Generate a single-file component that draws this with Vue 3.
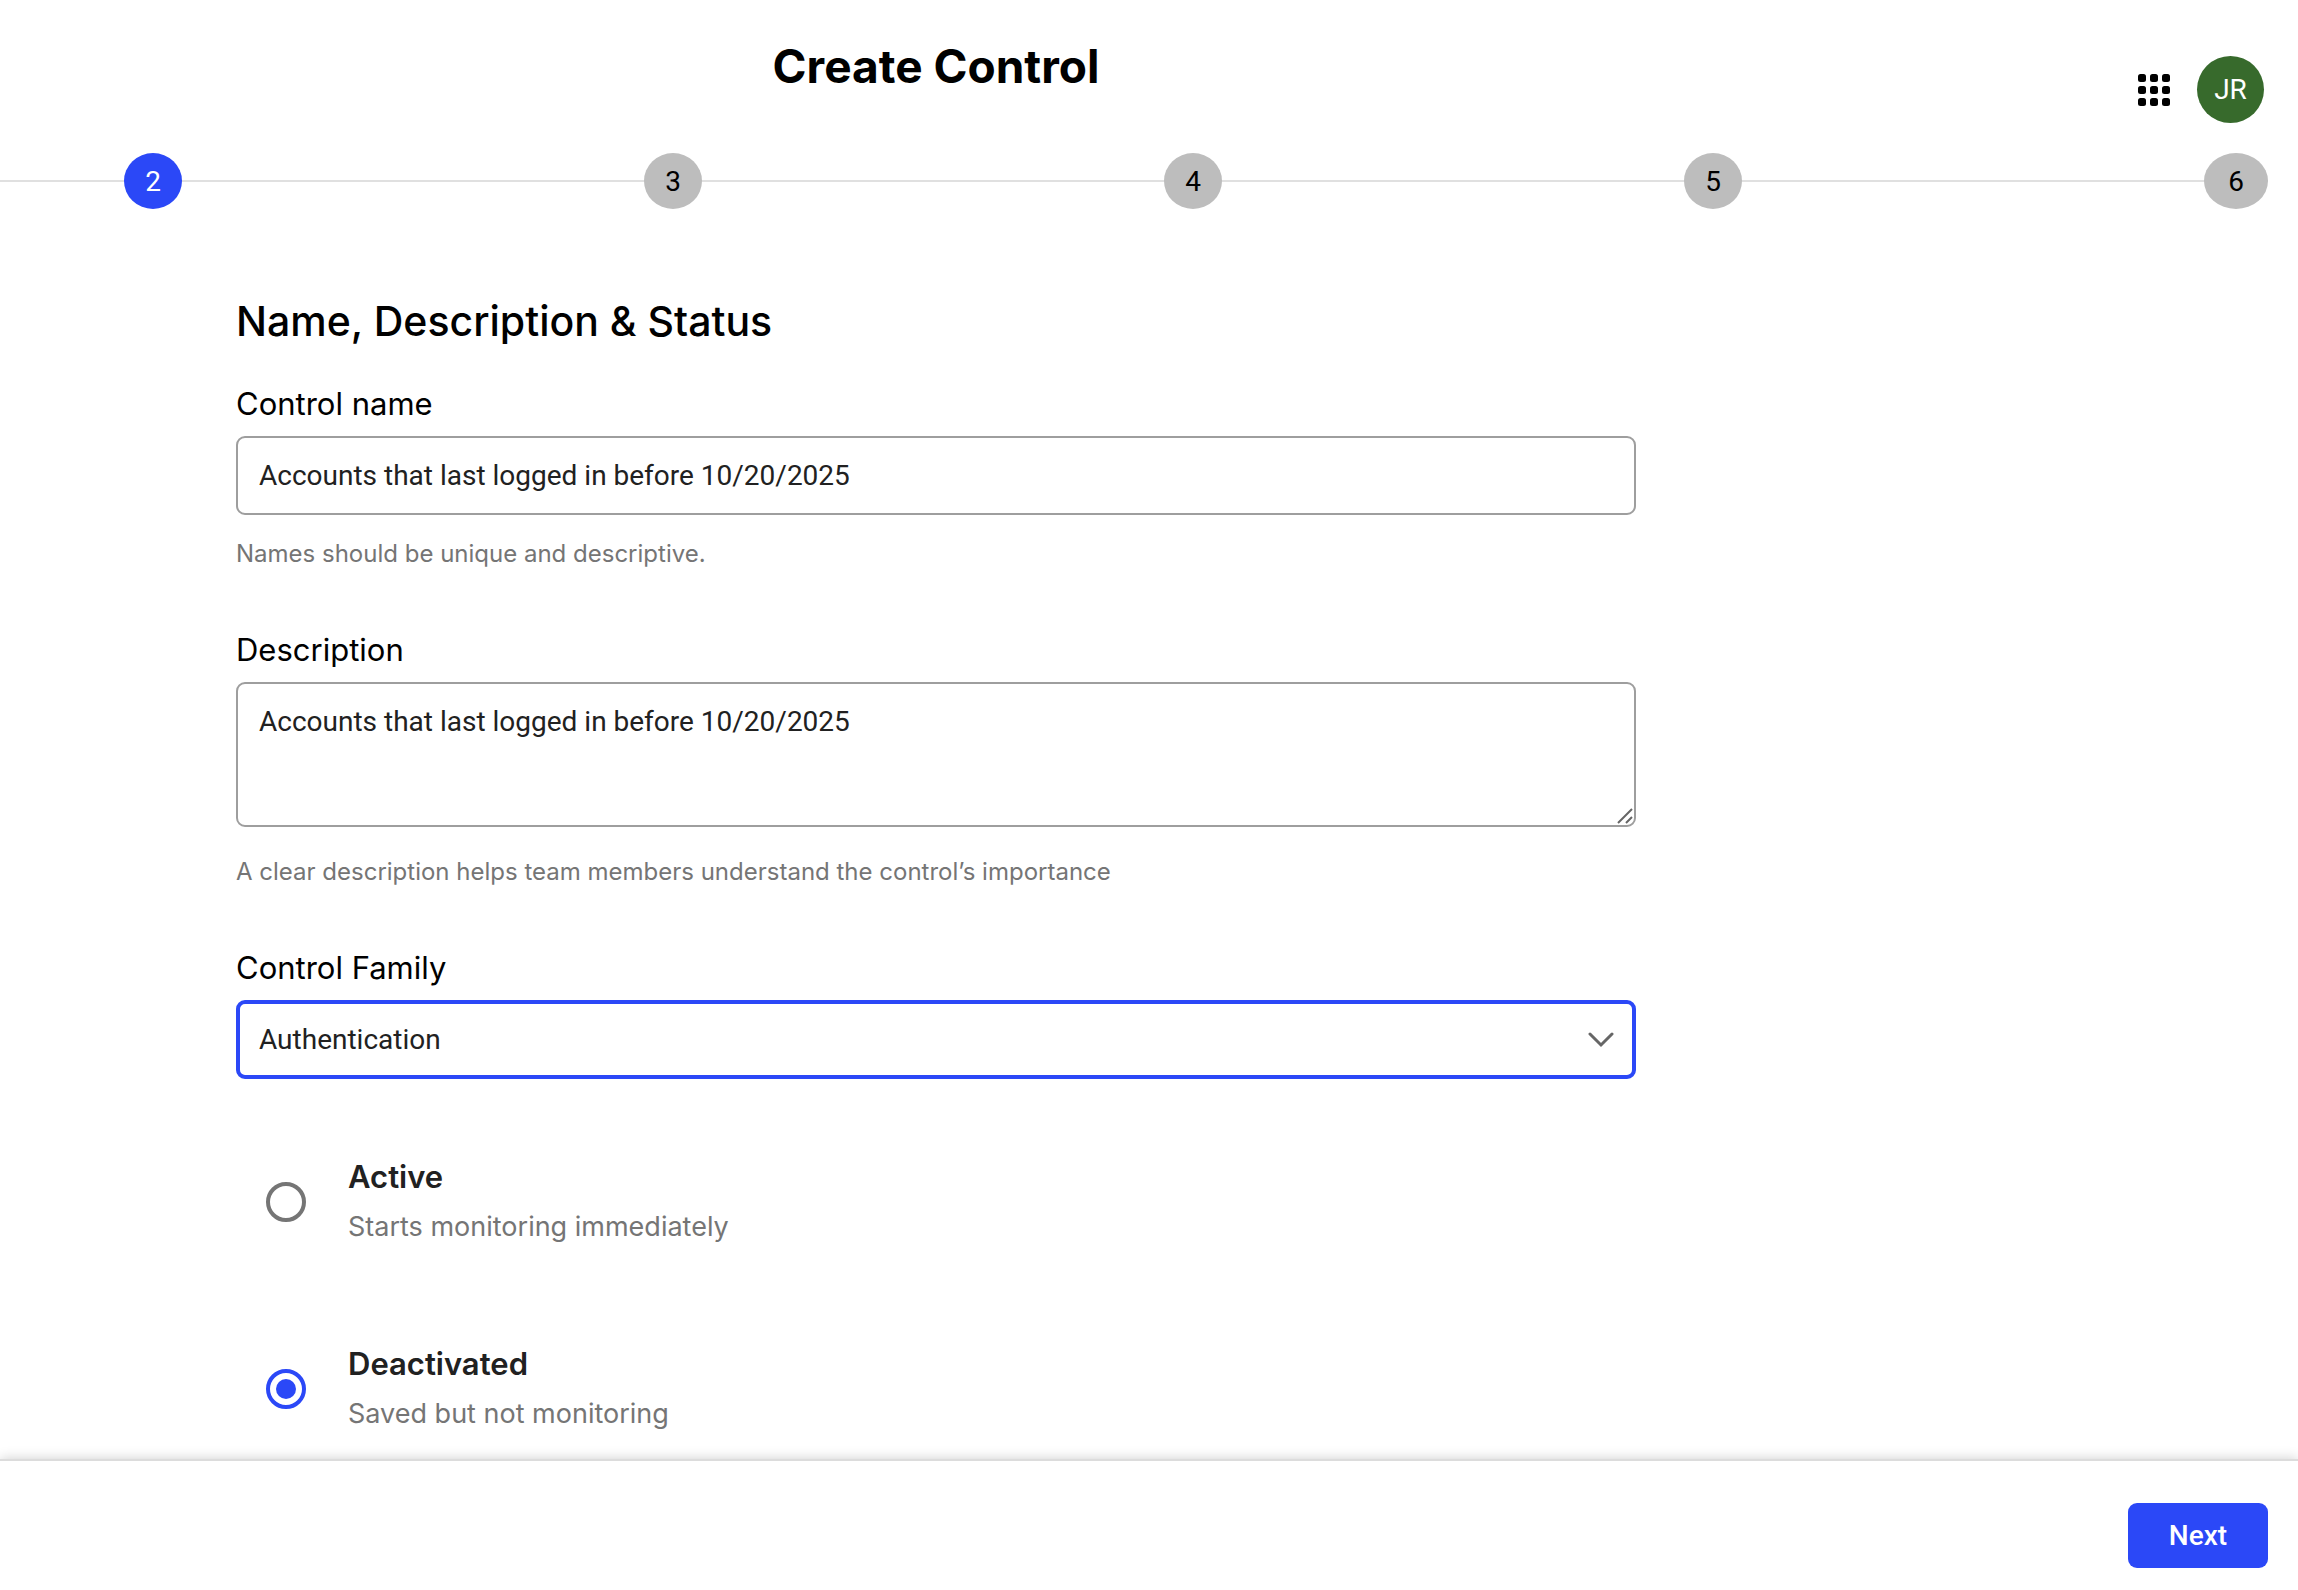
<script setup>
import { ref } from 'vue'

const steps = [2, 3, 4, 5, 6]
const currentStep = 2

const name = ref('Accounts that last logged in before 10/20/2025')
const description = ref('Accounts that last logged in before 10/20/2025')
const family = ref('Authentication')
const status = ref('deactivated')

const statuses = [
  { value: 'active', title: 'Active', detail: 'Starts monitoring immediately' },
  { value: 'deactivated', title: 'Deactivated', detail: 'Saved but not monitoring' },
]
</script>

<template>
  <div class="page">
    <header class="header">
      <h1 class="title">Create Control</h1>
      <div class="actions">
        <button class="apps" type="button" aria-label="Apps">
          <svg width="32" height="32" viewBox="0 0 32 32" aria-hidden="true">
            <template v-for="r in 3" :key="r">
              <rect v-for="c in 3" :key="c" :x="(c - 1) * 12" :y="(r - 1) * 12" width="8" height="8" rx="2.5" />
            </template>
          </svg>
        </button>
        <button class="avatar" type="button">JR</button>
      </div>
    </header>

    <ol class="stepper">
      <li v-for="s in steps" :key="s" class="step">
        <span class="dot" :class="{ current: s === currentStep }">{{ s }}</span>
      </li>
    </ol>

    <main class="form">
      <h2 class="heading">Name, Description &amp; Status</h2>

      <div class="field">
        <label class="label" for="name">Control name</label>
        <input id="name" v-model="name" class="control" type="text" />
        <p class="hint">Names should be unique and descriptive.</p>
      </div>

      <div class="field">
        <label class="label" for="description">Description</label>
        <div class="wrap">
          <textarea id="description" v-model="description" class="control area"></textarea>
          <svg class="grip" width="16" height="16" viewBox="0 0 16 16" aria-hidden="true">
            <path d="M1 15 15 1M9 15l6-6" />
          </svg>
        </div>
        <p class="hint area-hint">A clear description helps team members understand the control’s importance</p>
      </div>

      <div class="field">
        <label class="label" for="family">Control Family</label>
        <div class="wrap">
          <select id="family" v-model="family" class="control select">
            <option>Authentication</option>
          </select>
          <svg class="chevron" width="26" height="16" viewBox="0 0 26 16" aria-hidden="true">
            <path d="M2 2l11 11L24 2" />
          </svg>
        </div>
      </div>

      <div class="options" role="radiogroup" aria-label="Status">
        <label v-for="o in statuses" :key="o.value" class="option">
          <input v-model="status" class="radio" type="radio" name="status" :value="o.value" />
          <span class="option-text">
            <span class="option-title">{{ o.title }}</span>
            <span class="option-detail">{{ o.detail }}</span>
          </span>
        </label>
      </div>
    </main>

    <footer class="footer">
      <button class="next" type="button">Next</button>
    </footer>
  </div>
</template>

<style>
body {
  margin: 0;
  background: #fff;
}
</style>

<style scoped>
.page {
  display: flex;
  flex-direction: column;
  min-height: 100vh;
  overflow-x: hidden;
  font-family: Inter, sans-serif;
  color: #000;
}

.page * {
  box-sizing: border-box;
}

.header {
  display: flex;
  align-items: flex-start;
  padding: 38px 34px 30px 236px;
}

.title {
  flex: 0 1 1400px;
  margin: 0;
  font-size: 46px;
  line-height: 56px;
  font-weight: 700;
  text-align: center;
}

.actions {
  display: flex;
  align-items: center;
  gap: 27px;
  margin: 18px 0 0 auto;
}

.apps {
  display: flex;
  padding: 0;
  border: 0;
  background: none;
}

.avatar {
  width: 67px;
  height: 67px;
  padding: 0;
  border: 0;
  border-radius: 50%;
  background: #376a2c;
  color: #fff;
  font: 400 28px/40px Roboto, sans-serif;
}

.stepper {
  display: flex;
  margin: 0;
  padding: 0 30px 0 0;
  list-style: none;
}

.step {
  display: flex;
  flex: 1 1 0;
  align-items: center;
}

.step::before {
  content: '';
  flex: 1;
  height: 2px;
  background: #e0e0e0;
}

.step:first-child {
  flex: none;
}

.step:first-child::before {
  flex: 0 0 124px;
}

.step:last-child {
  flex-basis: 6px;
}

.dot {
  width: 58px;
  height: 56px;
  border-radius: 50%;
  background: #bdbdbd;
  font: 400 28px/58px Roboto, sans-serif;
  text-align: center;
}

.dot.current {
  background: #2b48f7;
  color: #fff;
}

.step:last-child .dot {
  width: 64px;
}

.form {
  width: 100%;
  max-width: 1636px;
  padding: 84px 0 25px 236px;
}

.heading {
  margin: 0 0 35px;
  font-size: 41px;
  line-height: 56px;
  font-weight: 500;
}

.field {
  display: flex;
  flex-direction: column;
  margin-bottom: 60px;
}

.label {
  margin-bottom: 12px;
  font-size: 31px;
  line-height: 40px;
}

.wrap {
  position: relative;
  display: flex;
}

.control {
  width: 100%;
  height: 79px;
  margin: 0;
  padding: 0 21px;
  border: 2px solid #9e9e9e;
  border-radius: 9px;
  outline: none;
  background: #fff;
  color: #212121;
  font: 400 28px/40px Roboto, sans-serif;
}

.area {
  height: 145px;
  padding: 18px 21px;
  resize: none;
}

.select {
  padding: 0 19px;
  border: 4px solid #2b48f7;
  appearance: none;
}

.grip {
  position: absolute;
  right: 3px;
  bottom: 3px;
  fill: none;
  stroke: #666;
  stroke-width: 2;
}

.chevron {
  position: absolute;
  top: 32px;
  right: 22px;
  fill: none;
  stroke: #666;
  stroke-width: 3;
  stroke-linecap: round;
  pointer-events: none;
}

.hint {
  margin: 23px 0 0;
  color: #757575;
  font-size: 24px;
  line-height: 32px;
}

.area-hint {
  margin-top: 29px;
}

.options {
  display: flex;
  flex-direction: column;
  gap: 97px;
  margin-top: 78px;
}

.option {
  display: flex;
  align-items: center;
  gap: 42px;
  padding-left: 30px;
}

.radio {
  display: grid;
  place-content: center;
  width: 40px;
  height: 40px;
  margin: 0;
  border: 4px solid #757575;
  border-radius: 50%;
  appearance: none;
}

.radio:checked {
  border-color: #2b48f7;
}

.radio:checked::before {
  content: '';
  width: 20px;
  height: 20px;
  border-radius: 50%;
  background: #2b48f7;
}

.option-text {
  display: flex;
  flex-direction: column;
  gap: 10px;
}

.option-title {
  color: #212121;
  font-size: 31px;
  line-height: 40px;
  font-weight: 600;
}

.option-detail {
  color: #757575;
  font-size: 27px;
  line-height: 40px;
}

.footer {
  display: flex;
  flex: 1;
  align-items: flex-start;
  justify-content: flex-end;
  padding: 42px 30px 22px;
  border-top: 2px solid #dcdcdc;
  background: #fff;
  box-shadow: 0 0 12px rgba(0, 0, 0, 0.2);
}

.next {
  height: 65px;
  width: 140px;
  padding: 0;
  border: 0;
  border-radius: 9px;
  background: #2b48f7;
  color: #fff;
  font: 500 28px/40px Roboto, sans-serif;
}
</style>
